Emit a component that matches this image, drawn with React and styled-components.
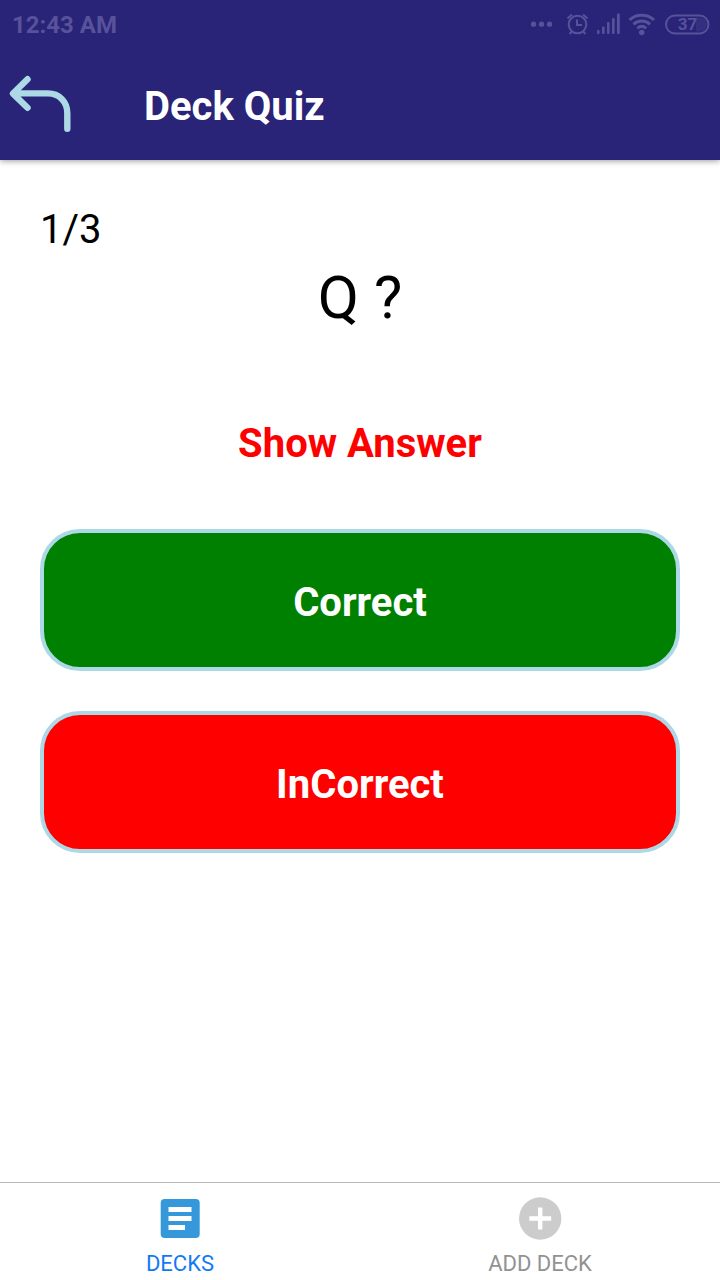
import React from "react";
import styled, { createGlobalStyle } from "styled-components";

const GlobalStyle = createGlobalStyle`
  *, *::before, *::after { box-sizing: border-box; }
  body { margin: 0; background: #ffffff; color: #000000; font-family: Roboto, "Liberation Sans", sans-serif; }
  button { font-family: inherit; cursor: pointer; }
`;

const Screen = styled.div`
  display: flex;
  flex-direction: column;
  min-height: 100vh;
`;

const Top = styled.header`
  background: #292477;
  box-shadow: 0 1px 6px rgba(0, 0, 0, 0.4);
`;

const StatusBar = styled.div`
  display: flex;
  align-items: center;
  justify-content: space-between;
  height: 48px;
  padding: 2px 10px 0 12px;
  color: #57529a;
  font-size: 24px;
  line-height: 28px;
  font-weight: 700;
`;

const StatusIcons = styled.svg`
  display: block;
  width: 180px;
  height: 28px;
`;

const NavBar = styled.div`
  display: flex;
  align-items: center;
  height: 112px;
  padding: 0 8px;
  gap: 72px;
`;

const BackButton = styled.button`
  display: block;
  padding: 0;
  border: 0;
  background: none;

  svg { display: block; width: 64px; height: 64px; }
`;

const Title = styled.h1`
  margin: 0;
  padding-top: 6px;
  color: #ffffff;
  font-size: 40px;
  line-height: 48px;
  font-weight: 700;
`;

const Quiz = styled.main`
  flex: 1;
  display: flex;
  flex-direction: column;
  align-items: stretch;
  padding: 46px 40px;
`;

const Progress = styled.p`
  margin: 0;
  font-size: 40px;
  line-height: 48px;
`;

const Question = styled.h2`
  margin: 8px 0 86px;
  font-size: 60px;
  line-height: 72px;
  font-weight: 400;
  text-align: center;
`;

const ShowAnswer = styled.button`
  align-self: center;
  padding: 0;
  border: 0;
  background: none;
  color: #ff0000;
  font-size: 40px;
  line-height: 48px;
  font-weight: 700;
`;

const Choices = styled.div`
  display: flex;
  flex-direction: column;
  gap: 40px;
  margin-top: 61px;
`;

const ChoiceButton = styled.button`
  height: 142px;
  padding: 6px 0 0;
  border: 4px solid #add8e6;
  border-radius: 40px;
  background: ${({ $color }) => $color};
  color: #ffffff;
  font-size: 40px;
  line-height: 48px;
  font-weight: 700;
`;

const TabBar = styled.nav`
  display: flex;
  height: 98px;
  border-top: 1px solid #b8b8b8;
`;

const Tab = styled.a`
  flex: 1;
  display: flex;
  flex-direction: column;
  align-items: center;
  gap: 8px;
  padding-top: 12px;
  color: ${({ $active }) => ($active ? "#107af5" : "#929292")};
  font-size: 22px;
  line-height: 26px;
  text-decoration: none;

  svg { display: block; width: 48px; height: 48px; }
`;

function BackIcon() {
  return (
    <svg viewBox="0 0 64 64" fill="none" stroke="#add8e6" strokeWidth="6.4" strokeLinecap="round" strokeLinejoin="round" aria-hidden="true">
      <path d="M19.5 7.2 5 21.6 19.5 35.8M5.5 21.4H40C51 21.4 59.3 29.5 59.3 41V56.8" />
    </svg>
  );
}

function StatusGlyphs() {
  return (
    <StatusIcons viewBox="0 0 180 28" fill="none" stroke="#57529a" strokeWidth="2" role="img" aria-label="Alarm, signal, wifi, battery 37 percent">
      <g fill="#57529a" stroke="none">
        <circle cx="3.5" cy="13.2" r="2.6" />
        <circle cx="11.5" cy="13.2" r="2.6" />
        <circle cx="19.5" cy="13.2" r="2.6" />
        <rect x="67" y="19" width="2.6" height="4" rx="1" />
        <rect x="72" y="15.5" width="2.6" height="7.5" rx="1" />
        <rect x="77" y="11" width="2.6" height="12" rx="1" />
        <rect x="82" y="7" width="2.6" height="16" rx="1" />
        <rect x="87" y="2.5" width="2.8" height="20.5" rx="1" />
        <circle cx="111.7" cy="21.5" r="2.8" />
      </g>
      <circle cx="47.5" cy="13.5" r="8.8" />
      <path d="M47 8.5V14H52M37.5 7.5 42 3.5M53 3.5 57.5 7.5M42 20.5 39.5 23M53 20.5 55.5 23" />
      <path strokeWidth="3" d="M99.500 9C106 2.500 117.400 2.500 124 9M103.500 13.300C108 9 115.500 9 120 13.300M107.300 17.300C110 15 113.500 15 116.200 17.300" />
      <rect x="136" y="4.500" width="42.500" height="18" rx="9" />
      <path d="M166 6.500H170A7 7 0 0 1 170 20.500H166Z" fill="#57529a" fillOpacity="0.25" stroke="none" />
      <text x="157.500" y="19" textAnchor="middle" fill="#57529a" stroke="none" fontSize="17" fontWeight="700">37</text>
    </StatusIcons>
  );
}

function DecksIcon() {
  return (
    <svg viewBox="0 0 48 48" aria-hidden="true">
      <rect x="4.700" y="4" width="39" height="39" rx="4" fill="#3498db" />
      <path d="M12.500 12H35.500V17H12.500ZM12.500 21H35.500V26H12.500ZM12.500 30H29V35H12.500Z" fill="#ffffff" />
    </svg>
  );
}

function AddIcon() {
  return (
    <svg viewBox="0 0 48 48" aria-hidden="true">
      <circle cx="24.200" cy="23.500" r="21.200" fill="#cccccc" />
      <path d="M13.300 23.500H35.200M24.200 12.600V34.400" stroke="#ffffff" strokeWidth="4.400" />
    </svg>
  );
}

export default function App() {
  return (
    <Screen>
      <GlobalStyle />
      <Top>
        <StatusBar>
          <span>12:43 AM</span>
          <StatusGlyphs />
        </StatusBar>
        <NavBar>
          <BackButton type="button" aria-label="Back"><BackIcon /></BackButton>
          <Title>Deck Quiz</Title>
        </NavBar>
      </Top>
      <Quiz>
        <Progress>1/3</Progress>
        <Question>Q ?</Question>
        <ShowAnswer type="button">Show Answer</ShowAnswer>
        <Choices>
          <ChoiceButton type="button" $color="#008000">Correct</ChoiceButton>
          <ChoiceButton type="button" $color="#ff0000">InCorrect</ChoiceButton>
        </Choices>
      </Quiz>
      <TabBar>
        <Tab href="#decks" $active aria-current="page"><DecksIcon />DECKS</Tab>
        <Tab href="#add-deck"><AddIcon />ADD DECK</Tab>
      </TabBar>
    </Screen>
  );
}
